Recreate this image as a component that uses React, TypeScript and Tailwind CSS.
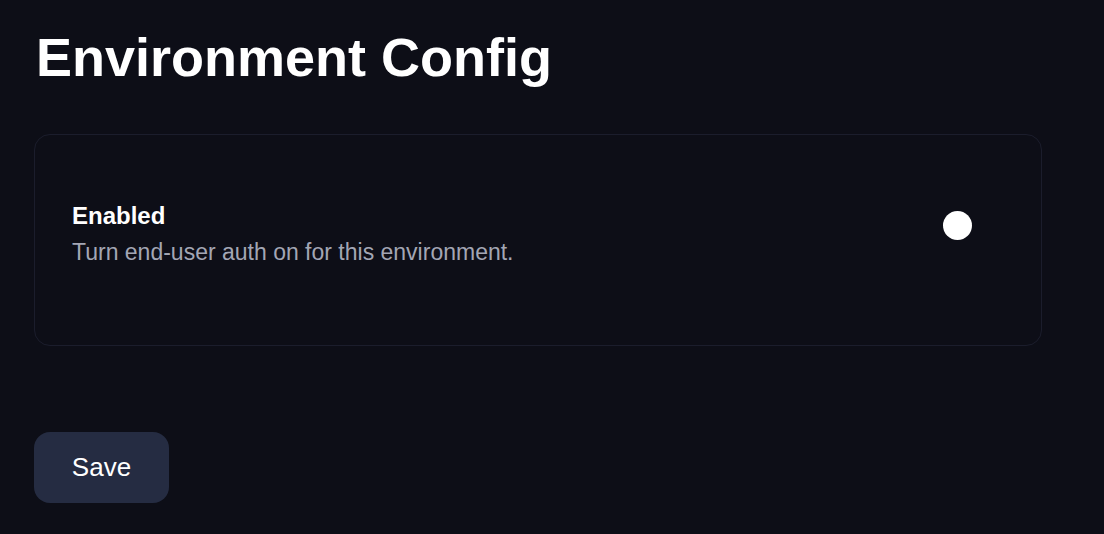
import React, { useState } from 'react';

// Environment config page: heading, one toggle card, save button

function Toggle({ on, onChange }: { on: boolean; onChange: (v: boolean) => void }) {
  return (
    <button
      type="button"
      role="switch"
      aria-checked={on}
      onClick={() => onChange(!on)}
      className="w-[29px] h-[29px] rounded-full bg-white shrink-0"
    />
  );
}

export default function App() {
  const [enabled, setEnabled] = useState(true);

  return (
    <div
      className="min-h-screen w-full bg-[#0d0e17] text-white pl-[34px] pr-[62px] pt-[30px]"
      style={{ fontFamily: '"Liberation Sans", Arial, sans-serif' }}
    >
      <h1 className="text-[54px] leading-none font-bold pl-[2px]">Environment Config</h1>

      <div className="mt-[50px] w-[1008px] h-[212px] rounded-[16px] border border-[#1b1d2c] flex items-start pl-[37px] pr-[69px] pt-[65px]">
        <div className="flex-1 flex flex-col gap-[4px]">
          <div className="text-[24px] leading-[32px] font-bold">Enabled</div>
          <div className="text-[23px] leading-[32px] text-[#a3a6b4]">
            Turn end-user auth on for this environment.
          </div>
        </div>
        <div className="mt-[11px]">
          <Toggle on={enabled} onChange={setEnabled} />
        </div>
      </div>

      <button
        type="button"
        className="mt-[86px] w-[135px] h-[71px] rounded-[16px] bg-[#252c42] text-[26px] text-white flex items-center justify-center"
      >
        Save
      </button>
    </div>
  );
}
